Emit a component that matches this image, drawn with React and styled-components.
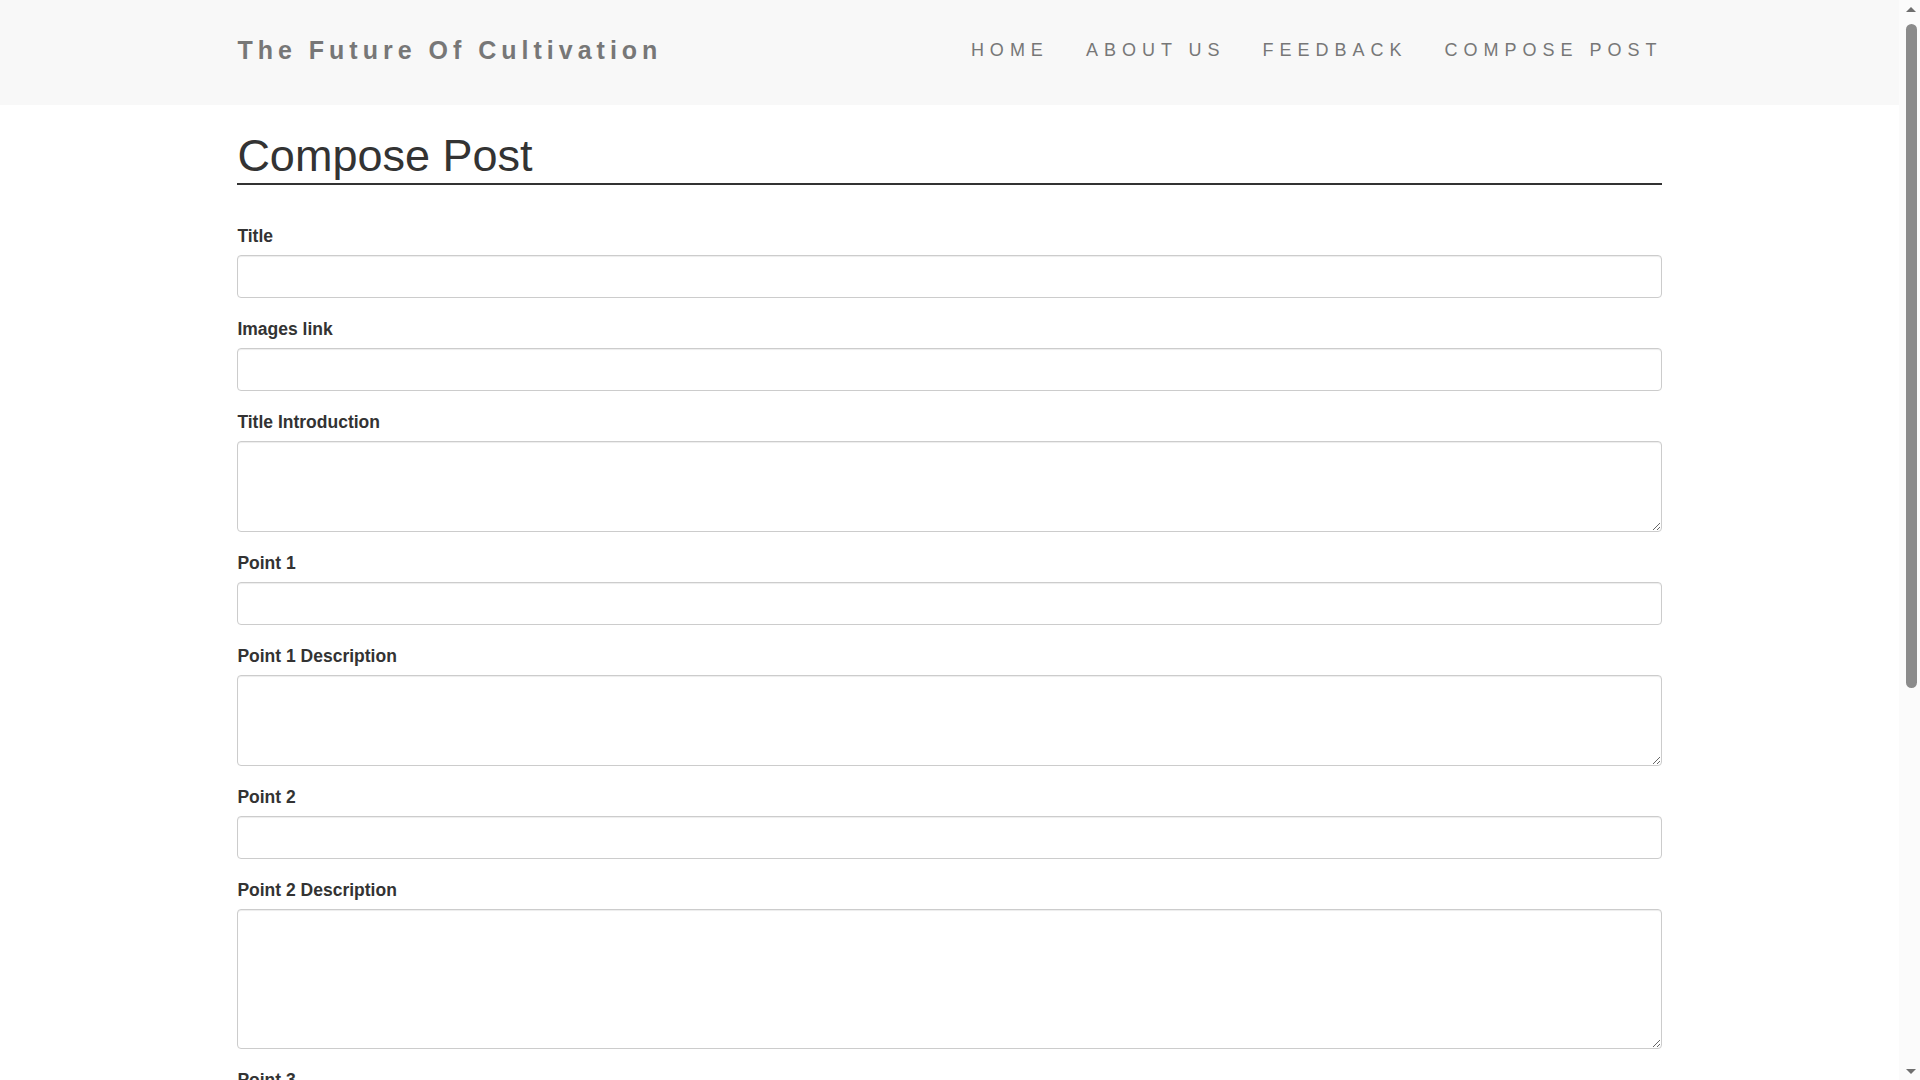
import React from "react";
import styled, { createGlobalStyle } from "styled-components";

const GlobalStyle = createGlobalStyle`
    body {
        margin: 0;
        background: #fff;
        color: #333;
        font-family: "Liberation Sans", Arial, Helvetica, sans-serif;
    }

    *, *::before, *::after {
        box-sizing: border-box;
    }
`;

// page area leaves room for the window scrollbar on the right
const Page = styled.div`
    width: calc(100vw - 21px);
`;

const Navbar = styled.nav`
    background-color: #f8f8f8;
    height: 105px;
`;

const NavInner = styled.div`
    width: 75%;
    height: 100%;
    margin: 0 auto;
    padding-bottom: 5px;
    display: flex;
    align-items: center;
    justify-content: space-between;
`;

const Brand = styled.a`
    color: #777;
    font-size: 25px;
    font-weight: bold;
    letter-spacing: 5px;
    text-decoration: none;
`;

const NavList = styled.ul`
    display: flex;
    gap: 37px;
    list-style: none;
    margin: 0 -1px 0 0;
    padding: 0;

    a {
        color: #777;
        font-size: 18px;
        letter-spacing: 6px;
        text-decoration: none;
        text-transform: uppercase;
    }
`;

const Container = styled.main`
    width: 75%;
    margin: 0 auto;
    padding: 26px 0 120px;
`;

const PageTitle = styled.h1`
    margin: 0 0 39px;
    padding-bottom: 2px;
    font-size: 45px;
    font-weight: normal;
    line-height: 1.1;
    color: #333;
    border-bottom: 2px solid #333;
`;

const FormGroup = styled.div`
    margin-bottom: 19px;
`;

const Label = styled.label`
    display: block;
    margin-bottom: 6px;
    font-size: 17.5px;
    font-weight: bold;
    line-height: 25px;
    color: #333;
`;

const fieldStyles = `
    display: block;
    width: 100%;
    padding: 6px 12px;
    font-family: inherit;
    font-size: 16px;
    color: #555;
    background-color: #fff;
    border: 1px solid #ccc;
    border-radius: 4px;
    box-shadow: inset 0 1px 1px rgba(0, 0, 0, 0.075);
    outline: none;
`;

const Input = styled.input`
    ${fieldStyles}
    height: 43px;
`;

const TextArea = styled.textarea`
    ${fieldStyles}
    height: ${(props) => props.$height}px;
    resize: vertical;
`;

const SubmitButton = styled.button`
    padding: 10px 28px;
    font-family: inherit;
    font-size: 17px;
    letter-spacing: 2px;
    color: #fff;
    background-color: #333;
    border: 1px solid #333;
    border-radius: 4px;
    cursor: pointer;
`;

const ScrollTrack = styled.div`
    position: fixed;
    top: 0;
    right: 0;
    width: 21px;
    height: 100vh;
    background-color: #fbfbfb;
    display: flex;
    flex-direction: column;
    align-items: center;
    padding: 7px 0 6px;
`;

const ScrollArrow = styled.div`
    width: 0;
    height: 0;
    margin-left: 3px;
    border-left: 5px solid transparent;
    border-right: 5px solid transparent;
    ${(props) =>
        props.$down
            ? "border-top: 5px solid #6f6f6f; margin-top: auto;"
            : "border-bottom: 5px solid #6f6f6f;"}
`;

const ScrollThumb = styled.div`
    width: 11px;
    height: 664px;
    margin: 12px 0 0 3px;
    background-color: #8b8b8b;
    border-radius: 6px;
`;

const navLinks = ["Home", "About Us", "Feedback", "Compose Post"];

const fields = [
    { id: "title", label: "Title" },
    { id: "images", label: "Images link" },
    { id: "intro", label: "Title Introduction", area: 91 },
    { id: "p1", label: "Point 1" },
    { id: "p1d", label: "Point 1 Description", area: 91 },
    { id: "p2", label: "Point 2" },
    { id: "p2d", label: "Point 2 Description", area: 140 },
    { id: "p3", label: "Point 3" },
    { id: "p3d", label: "Point 3 Description", area: 140 },
];

const App = () => (
    <>
        <GlobalStyle />
        <Page>
            <Navbar>
                <NavInner>
                    <Brand href="#">The Future Of Cultivation</Brand>
                    <NavList>
                        {navLinks.map((link) => (
                            <li key={link}>
                                <a href="#">{link}</a>
                            </li>
                        ))}
                    </NavList>
                </NavInner>
            </Navbar>
            <Container>
                <PageTitle>Compose Post</PageTitle>
                <form onSubmit={(e) => e.preventDefault()}>
                    {fields.map((field) => (
                        <FormGroup key={field.id}>
                            <Label htmlFor={field.id}>{field.label}</Label>
                            {field.area ? (
                                <TextArea id={field.id} $height={field.area} />
                            ) : (
                                <Input id={field.id} type="text" />
                            )}
                        </FormGroup>
                    ))}
                    <SubmitButton type="submit">Publish</SubmitButton>
                </form>
            </Container>
        </Page>
        <ScrollTrack aria-hidden="true">
            <ScrollArrow />
            <ScrollThumb />
            <ScrollArrow $down />
        </ScrollTrack>
    </>
);

export default App;
